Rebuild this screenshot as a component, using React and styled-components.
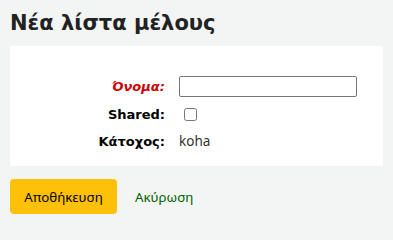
import React from 'react'
import styled, { createGlobalStyle } from 'styled-components'

const Global = createGlobalStyle`
    body {
        margin: 0;
        background: #f3f4f4;
        font-family: "Noto Sans", sans-serif;
        font-size: 13px;
        color: #333;
    }
`
const Page = styled.div`
    padding: 8px 10px;
`
const Titulo = styled.h1`
    margin: 0 0 8px 0;
    font-family: "DejaVu Sans", sans-serif;
    font-size: 21px;
    font-weight: bold;
    color: #222;
    line-height: 30px;
`
const Panel = styled.fieldset`
    margin: 0;
    border: 0;
    background: #fff;
    padding: 26px 0 13px 0;
`
const Lista = styled.ol`
    list-style: none;
    margin: 0;
    padding: 0;
`
const Linha = styled.li`
    display: flex;
    align-items: center;
    height: ${(p) => p.h || 26}px;
`
const Rotulo = styled.label`
    width: 155px;
    flex: none;
    text-align: right;
    margin-right: 14px;
    font-family: "DejaVu Sans", sans-serif;
    font-weight: bold;
    font-size: 13px;
    color: ${(p) => (p.required ? '#c00' : '#000')};
    font-style: ${(p) => (p.required ? 'italic' : 'normal')};
`
const Campo = styled.input`
    width: 178px;
    height: 21px;
    box-sizing: border-box;
    border: 1px solid #767676;
    border-radius: 2px;
    margin: 0;
`
const Caixa = styled.input`
    width: 13px;
    height: 13px;
    margin: 0 0 0 5px;
`
const Valor = styled.span`
    font-size: 13.5px;
    color: #333;
`
const Acoes = styled.div`
    display: flex;
    align-items: center;
    gap: 18px;
    margin-top: 13px;
`
const Botao = styled.button`
    background: #ffc107;
    border: 0;
    border-radius: 4px;
    height: 35px;
    width: 107px;
    padding: 0;
    font-family: "Noto Sans", sans-serif;
    font-size: 13.3px;
    color: #000;
`
const Link = styled.a`
    color: #006100;
    font-size: 13.3px;
    text-decoration: none;
`

export default function App() {
    return (
        <Page>
            <Global />
            <Titulo>Νέα λίστα μέλους</Titulo>
            <Panel>
                <Lista>
                    <Linha h={28}>
                        <Rotulo required>Όνομα:</Rotulo>
                        <Campo type="text" />
                    </Linha>
                    <Linha h={29}>
                        <Rotulo>Shared:</Rotulo>
                        <Caixa type="checkbox" />
                    </Linha>
                    <Linha h={24}>
                        <Rotulo>Κάτοχος:</Rotulo>
                        <Valor>koha</Valor>
                    </Linha>
                </Lista>
            </Panel>
            <Acoes>
                <Botao>Αποθήκευση</Botao>
                <Link href="#">Ακύρωση</Link>
            </Acoes>
        </Page>
    )
}
